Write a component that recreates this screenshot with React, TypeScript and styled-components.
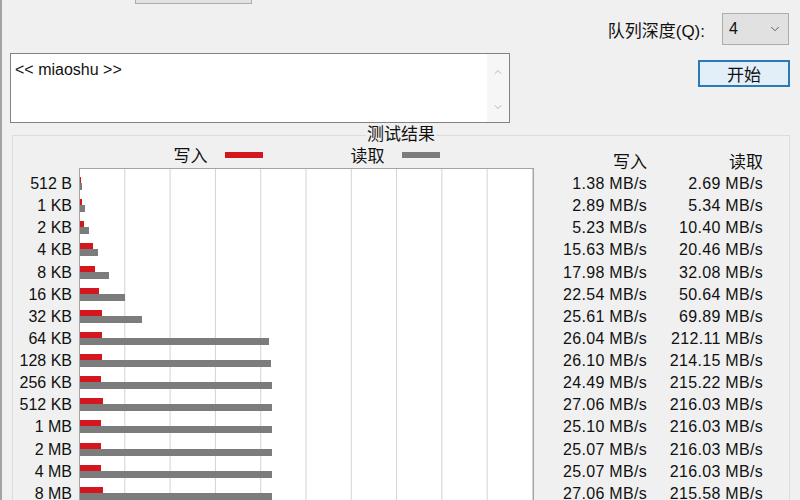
import React from "react";
import styled, { createGlobalStyle } from "styled-components";
import { ChevronDown, ChevronUp } from "lucide-react";

const GlobalStyle = createGlobalStyle`
  html, body { margin: 0; padding: 0; background: #f0f0f0; }
  #root { width: 800px; height: 500px; overflow: hidden; }
`;

const ROW_H = 22.14;
const WRITE_SCALE = 0.84;
const READ_SCALE = 0.89;

const rows: [string, number, number][] = [
  ["512 B", 1.38, 2.69],
  ["1 KB", 2.89, 5.34],
  ["2 KB", 5.23, 10.4],
  ["4 KB", 15.63, 20.46],
  ["8 KB", 17.98, 32.08],
  ["16 KB", 22.54, 50.64],
  ["32 KB", 25.61, 69.89],
  ["64 KB", 26.04, 212.11],
  ["128 KB", 26.1, 214.15],
  ["256 KB", 24.49, 215.22],
  ["512 KB", 27.06, 216.03],
  ["1 MB", 25.1, 216.03],
  ["2 MB", 25.07, 216.03],
  ["4 MB", 25.07, 216.03],
  ["8 MB", 27.06, 215.58],
];

const Window = styled.div`
  height: 500px;
  overflow: hidden;
  box-sizing: border-box;
  border-left: 2px solid #a3a3a3;
  padding: 0 10px 0 8px;
  background: #f0f0f0;
  font-family: "Liberation Sans", "Noto Sans CJK SC", sans-serif;
  font-size: 16px;
  color: #111;
`;

const TopRow = styled.div`
  display: flex;
  justify-content: space-between;
  align-items: flex-start;
  height: 123px;
`;

const LeftCol = styled.div`
  width: 500px;
  display: flex;
  flex-direction: column;
`;

const PartialButton = styled.div`
  margin-left: 125px;
  margin-top: -20px;
  width: 117px;
  height: 24px;
  box-sizing: border-box;
  border: 1px solid #adadad;
  background: #e1e1e1;
`;

const TextBox = styled.div`
  margin-top: 49px;
  height: 70px;
  box-sizing: border-box;
  border: 1px solid #828282;
  background: #fff;
  display: flex;
`;

const TextContent = styled.div`
  flex: 1;
  padding: 6px 4px;
  line-height: 20px;
  font-size: 16px;
`;

const ScrollTrack = styled.div`
  width: 22px;
  background: #f6f6f6;
  display: flex;
  flex-direction: column;
  justify-content: space-between;
  align-items: center;
  padding: 12px 0 9px;
  color: #a8a8a8;
`;

const RightCol = styled.div`
  display: flex;
  flex-direction: column;
  align-items: flex-end;
  padding-top: 13px;
`;

const QueueRow = styled.div`
  display: flex;
  align-items: center;
  gap: 17px;
  margin-right: 1px;
`;

const QueueLabel = styled.span`
  font-size: 17px;
`;

const SelectBox = styled.div`
  width: 67px;
  height: 32px;
  box-sizing: border-box;
  border: 1px solid #adadad;
  background: #e1e1e1;
  display: flex;
  align-items: center;
  justify-content: space-between;
  padding: 0 6px;
  font-size: 16px;
  color: #444;
`;

const SelectValue = styled.span`
  color: #111;
`;

const StartButton = styled.div`
  margin-top: 15px;
  width: 92px;
  height: 27px;
  box-sizing: border-box;
  border: 2px solid #2a7ab8;
  background: #e3eff8;
  display: flex;
  align-items: center;
  justify-content: center;
  font-size: 17px;
`;

const GroupBox = styled.fieldset`
  margin: 2px 0 0 2px;
  padding: 0;
  border: 1px solid #dcdcdc;
  min-width: 0;
`;

const GroupLegend = styled.legend`
  margin: 0 auto;
  padding: 0 1px;
  font-size: 17px;
  line-height: 20px;
`;

const ChartBody = styled.div`
  display: flex;
  align-items: flex-start;
`;

const PlotGrid = styled.div`
  display: grid;
  grid-template-columns: 59px 455px;
  grid-template-rows: 23px auto;
  column-gap: 7px;
`;

const LegendRow = styled.div`
  grid-column: 2;
  grid-row: 1;
  display: flex;
  justify-content: center;
  align-items: center;
  gap: 88px;
`;

const LegendItem = styled.div`
  display: flex;
  align-items: center;
  gap: 17px;
  font-size: 17px;
  line-height: 20px;
`;

const Swatch = styled.span<{ $color: string }>`
  display: block;
  width: 38px;
  height: 6px;
  margin-bottom: 4px;
  background: ${(p) => p.$color};
`;

const LabelsCol = styled.div`
  grid-column: 1;
  grid-row: 2;
  padding-top: 5px;
  display: flex;
  flex-direction: column;
  align-items: flex-end;
`;

const SizeLabel = styled.div`
  height: ${ROW_H}px;
  line-height: ${ROW_H}px;
  font-size: 16px;
  white-space: nowrap;
`;

const Plot = styled.div`
  grid-column: 2;
  grid-row: 2;
  box-sizing: border-box;
  border: 1px solid #a4a4a4;
  padding-top: 4px;
  height: 345px;
  background-color: #fff;
  background-image: linear-gradient(
    to right,
    transparent 44.3px,
    #d2d2d2 44.3px,
    #d2d2d2 45.3px
  );
  background-size: 45.3px 100%;
`;

const BarRow = styled.div`
  height: ${ROW_H}px;
  box-sizing: border-box;
  padding-top: 4px;
  display: flex;
  flex-direction: column;
  align-items: flex-start;
`;

const Bar = styled.div<{ $kind: "write" | "read" }>`
  height: ${(p) => (p.$kind === "write" ? 6 : 7)}px;
  background: ${(p) => (p.$kind === "write" ? "#d4161e" : "#7c7c7c")};
`;

const ValuesCol = styled.div<{ $width: number }>`
  width: ${(p) => p.$width}px;
  padding-top: 8px;
  display: flex;
  flex-direction: column;
  align-items: flex-end;
`;

const ValuesHeader = styled.div`
  height: 20px;
  line-height: 20px;
  font-size: 17px;
`;

const Value = styled.div`
  height: ${ROW_H}px;
  line-height: ${ROW_H}px;
  font-size: 16px;
  letter-spacing: 0.3px;
  white-space: nowrap;
`;

const fmt = (v: number) => `${v.toFixed(2)} MB/s`;

export default function App() {
  return (
    <>
      <GlobalStyle />
      <Window>
        <TopRow>
          <LeftCol>
            <PartialButton />
            <TextBox>
              <TextContent>{"<< miaoshu >>"}</TextContent>
              <ScrollTrack>
                <ChevronUp size={12} strokeWidth={1.6} />
                <ChevronDown size={12} strokeWidth={1.6} />
              </ScrollTrack>
            </TextBox>
          </LeftCol>
          <RightCol>
            <QueueRow>
              <QueueLabel>队列深度(Q):</QueueLabel>
              <SelectBox>
                <SelectValue>4</SelectValue>
                <ChevronDown size={14} strokeWidth={1.4} />
              </SelectBox>
            </QueueRow>
            <StartButton>开始</StartButton>
          </RightCol>
        </TopRow>
        <GroupBox>
          <GroupLegend>测试结果</GroupLegend>
          <ChartBody>
            <PlotGrid>
              <LegendRow>
                <LegendItem>
                  写入
                  <Swatch $color="#d4161e" />
                </LegendItem>
                <LegendItem>
                  读取
                  <Swatch $color="#7c7c7c" />
                </LegendItem>
              </LegendRow>
              <LabelsCol>
                {rows.map(([label]) => (
                  <SizeLabel key={label}>{label}</SizeLabel>
                ))}
              </LabelsCol>
              <Plot>
                {rows.map(([label, w, r]) => (
                  <BarRow key={label}>
                    <Bar $kind="write" style={{ width: `${w * WRITE_SCALE}px` }} />
                    <Bar $kind="read" style={{ width: `${r * READ_SCALE}px` }} />
                  </BarRow>
                ))}
              </Plot>
            </PlotGrid>
            <ValuesCol $width={113}>
              <ValuesHeader>写入</ValuesHeader>
              {rows.map(([label, w]) => (
                <Value key={label}>{fmt(w)}</Value>
              ))}
            </ValuesCol>
            <ValuesCol $width={116}>
              <ValuesHeader>读取</ValuesHeader>
              {rows.map(([label, , r]) => (
                <Value key={label}>{fmt(r)}</Value>
              ))}
            </ValuesCol>
          </ChartBody>
        </GroupBox>
      </Window>
    </>
  );
}
